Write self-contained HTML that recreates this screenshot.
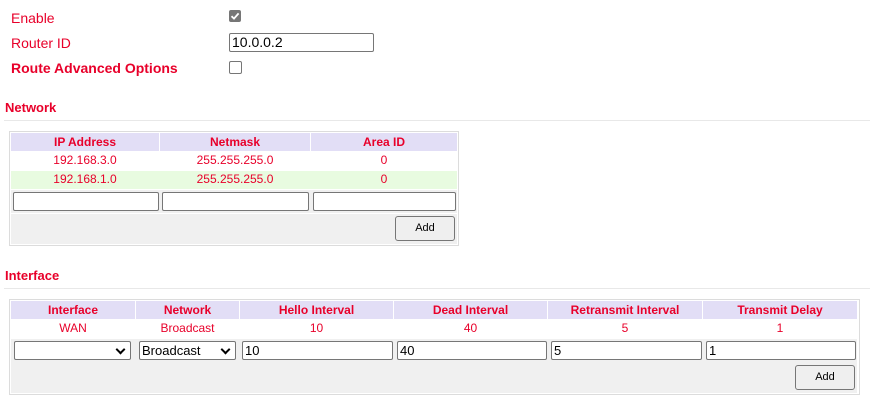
<!DOCTYPE html>
<html><head><style>
*{box-sizing:border-box;margin:0;padding:0}
body{width:870px;height:410px;background:#fff;font-family:"Liberation Sans",Arial,sans-serif;font-size:12px;color:#e8002a;position:relative;overflow:hidden}
.a{position:absolute}
.lbl{font-size:14px;line-height:16px}
.h{font-weight:bold;font-size:13px}
.line{height:1px;background:#e8e8e8}
.box{border:1px solid #dcdcdc;background:#fff}
.c{position:absolute;text-align:center;line-height:18px}
.hd{background:#e2def6;font-weight:bold}
.inp{position:absolute;border:1px solid #767676;border-radius:2px;background:#fff;height:19px;font-size:13px;color:#000;padding-left:2px;line-height:17px;font-family:"Liberation Sans",Arial,sans-serif}
.btn{position:absolute;border:1px solid #767676;border-radius:3px;background:#efefef;color:#000;text-align:center;font-size:11px;line-height:23px}
.sel:after{content:"";position:absolute;right:6px;top:4px;width:5px;height:5px;border-right:2px solid #000;border-bottom:2px solid #000;transform:rotate(45deg)}
</style></head><body>
<div class="a lbl" style="left:11px;top:10px">Enable</div>
<div class="a" style="left:229px;top:10px;width:12px;height:12px;background:#767676;border-radius:2px"><svg width="12" height="12" viewBox="0 0 12 12"><path d="M2.5 6.2 L5 8.6 L9.6 3.4" stroke="#fff" stroke-width="1.8" fill="none"/></svg></div>
<div class="a lbl" style="left:11px;top:35px">Router ID</div>
<div class="inp" style="left:229px;top:33px;width:145px;height:19px;font-size:14px">10.0.0.2</div>
<div class="a lbl" style="left:11px;top:60px;font-weight:bold">Route Advanced Options</div>
<div class="a" style="left:229px;top:61px;width:13px;height:13px;border:1px solid #767676;border-radius:2px"></div>

<div class="a h" style="left:5px;top:100px">Network</div>
<div class="a line" style="left:4px;top:120px;width:866px"></div>
<div class="a box" style="left:9px;top:131px;width:450px;height:115px"></div>
<div class="c hd" style="left:11px;top:133px;width:148px">IP Address</div>
<div class="c hd" style="left:160px;top:133px;width:150px">Netmask</div>
<div class="c hd" style="left:311px;top:133px;width:146px">Area ID</div>
<div class="c" style="left:11px;top:151px;width:148px">192.168.3.0</div>
<div class="c" style="left:160px;top:151px;width:150px">255.255.255.0</div>
<div class="c" style="left:311px;top:151px;width:146px">0</div>
<div class="a" style="left:11px;top:171px;width:446px;height:18px;background:#e8fbe0"></div>
<div class="c" style="left:11px;top:170px;width:148px">192.168.1.0</div>
<div class="c" style="left:160px;top:170px;width:150px">255.255.255.0</div>
<div class="c" style="left:311px;top:170px;width:146px">0</div>
<div class="a" style="left:11px;top:190px;width:446px;height:23px;background:#f0f0f0"></div>
<div class="inp" style="left:13px;top:192px;width:146px"></div>
<div class="inp" style="left:162px;top:192px;width:147px"></div>
<div class="inp" style="left:313px;top:192px;width:143px"></div>
<div class="a" style="left:11px;top:214px;width:446px;height:30px;background:#f0f0f0"></div>
<div class="btn" style="left:395px;top:216px;width:60px;height:25px">Add</div>

<div class="a h" style="left:5px;top:268px">Interface</div>
<div class="a line" style="left:4px;top:288px;width:866px"></div>
<div class="a box" style="left:9px;top:299px;width:851px;height:96px"></div>
<div class="c hd" style="left:11px;top:301px;width:124px">Interface</div>
<div class="c hd" style="left:136px;top:301px;width:103px">Network</div>
<div class="c hd" style="left:240px;top:301px;width:153px">Hello Interval</div>
<div class="c hd" style="left:394px;top:301px;width:153px">Dead Interval</div>
<div class="c hd" style="left:548px;top:301px;width:154px">Retransmit Interval</div>
<div class="c hd" style="left:703px;top:301px;width:154px">Transmit Delay</div>
<div class="c" style="left:11px;top:319px;width:124px">WAN</div>
<div class="c" style="left:136px;top:319px;width:103px">Broadcast</div>
<div class="c" style="left:240px;top:319px;width:153px">10</div>
<div class="c" style="left:394px;top:319px;width:153px">40</div>
<div class="c" style="left:548px;top:319px;width:154px">5</div>
<div class="c" style="left:703px;top:319px;width:154px">1</div>
<div class="a" style="left:11px;top:339px;width:846px;height:54px;background:#f0f0f0"></div>
<div class="inp sel" style="left:14px;top:341px;width:117px"></div>
<div class="inp sel" style="left:139px;top:341px;width:97px">Broadcast</div>
<div class="inp" style="left:242px;top:341px;width:151px">10</div>
<div class="inp" style="left:397px;top:341px;width:150px">40</div>
<div class="inp" style="left:551px;top:341px;width:151px">5</div>
<div class="inp" style="left:706px;top:341px;width:150px">1</div>
<div class="btn" style="left:795px;top:365px;width:60px;height:25px">Add</div>
</body></html>
